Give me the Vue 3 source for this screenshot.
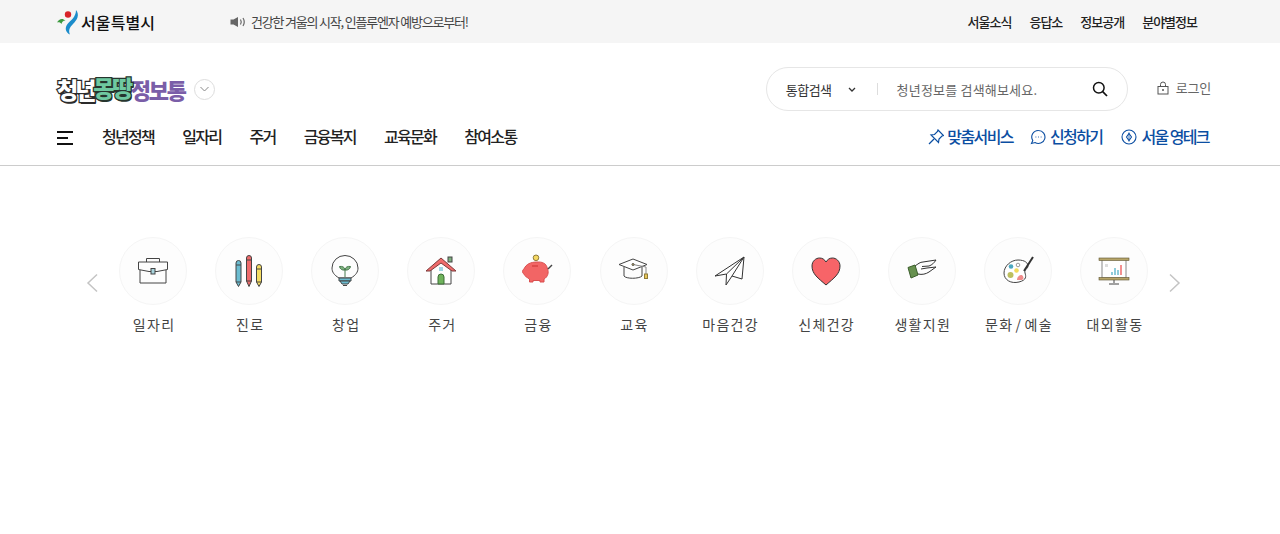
<script setup>
const util = ['서울소식', '응답소', '정보공개', '분야별정보']
const nav = ['청년정책', '일자리', '주거', '금융복지', '교육문화', '참여소통']
const cats = ['job', 'career', 'startup', 'house', 'finance', 'edu', 'mind', 'body', 'life', 'art', 'activity']
const labels = {
  job: '일자리', career: '진로', startup: '창업', house: '주거', finance: '금융', edu: '교육',
  mind: '마음건강', body: '신체건강', life: '생활지원', art: '문화\u200a/\u200a예술', activity: '대외활동'
}
</script>

<template>
  <div class="page">
    <div class="topbar">
      <div class="seoul">
        <svg width="25" height="26" viewBox="0 0 25 26">
          <circle cx="12" cy="5.5" r="3.2" fill="#d8232a" />
          <path d="M1 13.5C3 10 6 8.5 9.5 11.5 7 11.5 6 13 5.5 15 4.500 13.500 3 13 1 13.500Z" fill="#3c9a3f" />
          <path d="M20 1C24 6 21 11 17 15 14 18 12 21 14 25.500 9.500 23.500 8.500 19 11.500 15 15 11 20 8 20 1Z" fill="#1b8ccb" />
        </svg>
        <span>서울특별시</span>
      </div>
      <div class="notice">
        <svg width="17" height="12" viewBox="0 0 17 12" fill="none">
          <path d="M0.500 3.500H3.500L8 1V11L3.500 8.500H0.500Z" fill="#666" />
          <path d="M10.500 3.500Q12 6 10.500 8.500M13 2Q15.500 6 13 10" stroke="#666" stroke-width="1.200" />
        </svg>
        <span>건강한 겨울의 시작, 인플루엔자 예방으로부터!</span>
      </div>
      <div class="util">
        <a v-for="u in util" :key="u">{{ u }}</a>
      </div>
    </div>

    <header class="header">
      <div class="row-main">
        <div class="logo">
          <span class="lg-a">청년</span><span class="lg-b">몽땅</span><span class="lg-c">정보통</span>
          <span class="logo-more">
            <svg width="9" height="6" viewBox="0 0 9 6" fill="none"><path d="M0.500 1L4.500 5L8.500 1" stroke="#888" /></svg>
          </span>
        </div>
        <div class="search">
          <span class="s-type">통합검색</span>
          <svg class="s-chev" width="8" height="5" viewBox="0 0 8 5" fill="none"><path d="M1 1L4 4L7 1" stroke="#333" stroke-width="1.300" /></svg>
          <i class="s-sep"></i>
          <span class="s-ph">청년정보를 검색해보세요.</span>
          <svg class="s-icon" width="16" height="16" viewBox="0 0 16 16" fill="none">
            <circle cx="6.800" cy="6.800" r="5.300" stroke="#111" stroke-width="1.500" />
            <path d="M10.700 10.700L15 15" stroke="#111" stroke-width="1.700" />
          </svg>
        </div>
        <div class="login">
          <svg width="12" height="14" viewBox="0 0 12 14" fill="none">
            <rect x="1" y="5.500" width="10" height="7.500" stroke="#555" />
            <path d="M3.500 5.500V3.500A2.500 2.500 0 0 1 8.500 3.500V5.500" stroke="#555" />
            <circle cx="6" cy="9" r="1" fill="#555" />
          </svg>
          <span>로그인</span>
        </div>
      </div>
      <div class="row-nav">
        <div class="burger"><i></i><i class="short"></i><i></i></div>
        <nav class="gnb"><a v-for="n in nav" :key="n">{{ n }}</a></nav>
        <div class="quick">
          <a class="q-first">
            <svg width="16" height="16" viewBox="0 0 16 16" fill="none" stroke="#0b4ea2" stroke-width="1.200">
              <path d="M9.500 1L15 6.500 13.500 7 10.500 10 10 13.500 2.500 6 6 5.500 9 2.500Z" transform="translate(0.500 0)" />
              <path d="M6 10L1 15" />
            </svg>
            맞춤서비스
          </a>
          <a>
            <svg width="16" height="16" viewBox="0 0 16 16" fill="none" stroke="#0b4ea2" stroke-width="1.100">
              <path d="M8.500 1.500A6.500 6.500 0 1 1 5 13.500L1.500 14.500 2.800 11.500A6.500 6.500 0 0 1 8.500 1.500Z" />
              <path d="M5.500 8H6.300M8.100 8H8.900M10.700 8H11.500" />
            </svg>
            신청하기
          </a>
          <a>
            <svg width="16" height="16" viewBox="0 0 16 16" fill="none" stroke="#0b4ea2" stroke-width="1.100">
              <circle cx="8" cy="8" r="7" />
              <path d="M8 4.500L10.500 8 8 11.500 5.500 8Z" />
              <path d="M8 3.500V12.500" stroke-width="0.800" />
            </svg>
            서울 영테크
          </a>
        </div>
      </div>
    </header>

    <section class="carousel">
      <svg class="arrow prev" width="14" height="20" viewBox="0 0 14 20" fill="none"><path d="M12 1.500L3 10L12 18.500" stroke="#c4c4c4" stroke-width="1.500" /></svg>
      <div class="cats">
        <div class="cat" v-for="c in cats" :key="c">
          <div class="circle">
            <svg width="34" height="34" viewBox="0 0 34 34" fill="none" stroke="#444" stroke-width="1">
              <template v-if="c === 'job'">
                <path d="M2.500 8H31.500V15.500L21 17.500H13L2.500 15.500Z" />
                <path d="M4 16V29H30V16" />
                <path d="M10.500 8V4.500H23.500V8" />
                <rect x="15" y="14.500" width="4" height="5.500" fill="#a7d4dd" />
              </template>
              <template v-else-if="c === 'career'">
                <path d="M4 9A2.500 2.500 0 0 1 9 9V28L6.500 32.500 4 28Z" fill="#6bbcd0" />
                <path d="M4 11H9M4 28H9" />
                <path d="M14.500 4A2.500 2.500 0 0 1 19.500 4V27L17 32.500 14.500 27Z" fill="#ef6b6b" />
                <path d="M14.500 6H19.500M14.500 27H19.500" />
                <path d="M24.500 13A2.500 2.500 0 0 1 29.500 13V28L27 32.500 24.500 28Z" fill="#f5dc62" />
                <path d="M24.500 15H29.500M24.500 28H29.500" />
              </template>
              <template v-else-if="c === 'startup'">
                <path d="M11 24C6 21 4 18 4 14A13 12.500 0 0 1 30 14C30 18 28 21 23 24Z" />
                <path d="M17 23V15M17 16C17 13 14 12 11.500 12.500 12 15 14 16.500 17 16ZM17 16C17 13 20 12 22.500 12.500 22 15 20 16.500 17 16Z" stroke="#467a4c" fill="#7eb07f" />
                <path d="M11 24H23V27H11Z" fill="#6bbcd0" />
                <path d="M12 27H22L20 30H14Z" fill="#6bbcd0" />
                <path d="M15 31.500H19" />
              </template>
              <template v-else-if="c === 'house'">
                <path d="M7 16V30H27V16" fill="#fff" />
                <path d="M2 17L17 4 32 17 28 17 17 9 6 17Z" fill="#ef6b6b" stroke="#7d3a3a" />
                <rect x="24" y="3" width="4" height="5" fill="#7eb07f" />
                <rect x="15" y="13" width="4" height="4" fill="#9fd5e3" stroke="none" />
                <path d="M14 30V23A3 3 0 0 1 20 23V30Z" fill="#6fb35c" stroke="#3c6d36" />
              </template>
              <template v-else-if="c === 'finance'">
                <path d="M4 15C6 10 11 8 17 8 19 8 22 8 23 9 25 9 27 12 27.500 15 29 18 28 23 24 25V28H20V26.500H13V28H9.500V25C6.500 23 4.500 22 4 20 2 19 2 16 4 15Z" fill="#f26565" stroke="#d94f4f" />
                <circle cx="16" cy="3.800" r="2.800" fill="#f5d862" stroke="#8f7c3a" />
                <path d="M28 15L32 11" stroke-width="1.500" />
                <path d="M12 12H18" stroke="#c33" />
              </template>
              <template v-else-if="c === 'edu'">
                <path d="M2 10.500L16 5 30 10.500 16 16Z" fill="#fff" />
                <path d="M7 13V22C9 25 22 25 25 22V13" />
                <path d="M16 10.500L29 13V20" stroke="#888" />
                <rect x="27.500" y="20" width="3" height="4.500" fill="#e8c65a" stroke="#8f7c3a" />
                <circle cx="16" cy="10.500" r="1" fill="#e8c65a" />
              </template>
              <template v-else-if="c === 'mind'">
                <path d="M2 22L31 3 29 25 19 22 13 31 13.500 20Z" stroke="#333" fill="#fff" />
                <path d="M13.500 20L31 3 19 22" stroke="#333" />
              </template>
              <template v-else-if="c === 'body'">
                <path d="M17 31C9 24 3 20 3 12 3 7 7 4 10.500 4 13.500 4 15.500 5.500 17 8 18.500 5.500 20.500 4 23.500 4 27 4 31 7 31 12 31 20 25 24 17 31Z" fill="#f76468" stroke="#333" />
              </template>
              <template v-else-if="c === 'life'">
                <path d="M10 12C13 10 15 8 18 8L31 6C29 9 27 11 24 12L17 12.500" stroke="#333" />
                <path d="M13 20C17 21 21 20 24 18L31 13 22 14 16 15" stroke="#333" />
                <path d="M3 13.500L10 11 13 21 6 24Z" fill="#67914f" stroke="#3c5f2d" />
              </template>
              <template v-else-if="c === 'art'">
                <path d="M17 6C24 6 27 9 27 12 27 15 23 15 24 19 25 22 26 26 18 28 10 30 3 26 3 19 3 12 10 6 17 6Z" fill="#fff" />
                <circle cx="10" cy="12.500" r="2.300" fill="#4ca8c0" stroke="none" />
                <circle cx="17" cy="11" r="1.800" stroke="#999" />
                <circle cx="15.500" cy="16.500" r="2.300" fill="#f3da5b" stroke="none" />
                <circle cx="9.500" cy="21" r="3" fill="#bdbf5f" stroke="none" />
                <path d="M16 26C16 23 18 21 21 21 23 23 23 25 21 26Z" fill="#f08b8b" stroke="none" />
                <path d="M32 3L23 17" stroke-width="2" stroke="#333" />
              </template>
              <template v-else>
                <path d="M5 6V24H29V6" stroke="#888" fill="#fff" />
                <rect x="2" y="4" width="30" height="2.500" fill="#b6a468" stroke="#5c5330" stroke-width="0.600" />
                <rect x="2" y="23.500" width="30" height="2.500" fill="#b6a468" stroke="#5c5330" stroke-width="0.600" />
                <path d="M17 26V29M12 30H22" />
                <path d="M15 21V18M18 21V14M21 21V16" stroke="#6bbcd0" stroke-width="1.500" />
                <path d="M24 21V11" stroke="#ef6b6b" stroke-width="1.500" />
                <rect x="8" y="10" width="3" height="3" fill="#ddd" stroke="none" />
              </template>
            </svg>
          </div>
          <span class="label">{{ labels[c] }}</span>
        </div>
      </div>
      <svg class="arrow next" width="14" height="20" viewBox="0 0 14 20" fill="none"><path d="M2 1.500L11 10L2 18.500" stroke="#c4c4c4" stroke-width="1.500" /></svg>
    </section>
  </div>
</template>

<style scoped>
.page {
  width: 1280px;
  height: 534px;
  overflow: hidden;
  background: #fff;
  font-family: "Noto Sans CJK KR", "Noto Sans", sans-serif;
  color: #222;
}
a { color: inherit; text-decoration: none; }

.topbar {
  height: 43px;
  background: #f5f5f5;
  display: flex;
  align-items: center;
  padding: 0 83px 0 56px;
}
.seoul {
  width: 174px;
  display: flex;
  align-items: center;
  font-size: 16px;
  font-weight: 500;
  color: #111;
  letter-spacing: 0.1px;
}
.notice {
  display: flex;
  align-items: center;
  gap: 4px;
  font-size: 13px;
  letter-spacing: -1.2px;
  color: #444;
}
.util {
  margin-left: auto;
  display: flex;
  gap: 18px;
  font-size: 13px;
  font-weight: 500;
  letter-spacing: -1px;
  color: #222;
}

.header {
  height: 122px;
  border-bottom: 1px solid #ccc;
  padding: 0 69px 0 56px;
}
.row-main {
  box-sizing: border-box;
  height: 68px;
  padding-top: 24px;
  display: flex;
  align-items: center;
}
.logo {
  display: flex;
  align-items: center;
  font-weight: 900;
}
.lg-a {
  color: #fff;
  -webkit-text-stroke: 2.500px #2b2b2b;
  paint-order: stroke fill;
  text-shadow: 1px 2px 0 #2b2b2b;
  font-size: 23px;
  letter-spacing: -3px;
  margin-left: 1px;
}
.lg-b {
  color: #6fc9a0;
  -webkit-text-stroke: 2.500px #26352e;
  paint-order: stroke fill;
  text-shadow: 1px 2px 0 #26352e;
  font-size: 23px;
  letter-spacing: -2.500px;
  position: relative;
  top: -2px;
}
.lg-c {
  color: #7a5ea8;
  font-size: 22px;
  letter-spacing: -2.200px;
}
.logo-more {
  width: 21px;
  height: 21px;
  box-sizing: border-box;
  margin-left: 9px;
  border: 1px solid #ddd;
  border-radius: 50%;
  display: flex;
  align-items: center;
  justify-content: center;
}
.search {
  margin-left: auto;
  width: 362px;
  height: 44px;
  box-sizing: border-box;
  border: 1px solid #e6e6e6;
  border-radius: 22px;
  display: flex;
  align-items: center;
  padding: 0 19px;
  font-size: 13px;
  letter-spacing: -0.5px;
  color: #333;
}
.s-chev { margin-left: 16px; margin-right: 21px; }
.s-sep { width: 1px; height: 12px; background: #ddd; margin-right: 19px; }
.s-ph { color: #666; letter-spacing: 0.2px; font-size: 13px; }
.s-icon { margin-left: auto; }
.login {
  margin-left: 29px;
  margin-bottom: 3px;
  display: flex;
  align-items: center;
  gap: 7px;
  font-size: 13px;
  color: #666;
  letter-spacing: -0.2px;
}

.row-nav {
  height: 50px;
  display: flex;
  align-items: center;
}
.burger {
  width: 16px;
  margin: 4px 29px 0 1px;
  display: flex;
  flex-direction: column;
  gap: 4px;
}
.burger i { display: block; height: 2px; background: #111; }
.burger i.short { width: 11px; }
.gnb {
  display: flex;
  gap: 28.2px;
  font-size: 16px;
  font-weight: 500;
  letter-spacing: -1.700px;
  color: #222;
}
.quick {
  margin-left: auto;
  margin-right: 2px;
  display: flex;
  gap: 18px;
  font-size: 16px;
  font-weight: 500;
  letter-spacing: -1.600px;
  color: #0b4ea2;
}
.quick a { display: flex; align-items: center; gap: 3px; }
.quick a.q-first { margin-right: -2px; gap: 2px; }
.quick svg { margin-right: 1px; margin-left: 1px; margin-top: 1px; }

.carousel {
  display: flex;
  align-items: flex-start;
  padding: 71px 0 0 85px;
}
.arrow { margin-top: 36px; }
.arrow.prev { margin-right: 6px; }
.arrow.next { margin-left: 6px; }
.cats { display: flex; }
.cat {
  width: 96.1px;
  display: flex;
  flex-direction: column;
  align-items: center;
  gap: 9px;
}
.circle {
  width: 68px;
  height: 68px;
  box-sizing: border-box;
  border: 1px solid #f5f5f5;
  border-radius: 50%;
  background: #fdfdfd;
  display: flex;
  align-items: center;
  justify-content: center;
}
.label {
  font-size: 14px;
  letter-spacing: 1.300px;
  margin-left: 2px;
  color: #444;
  line-height: 20px;
}
</style>
